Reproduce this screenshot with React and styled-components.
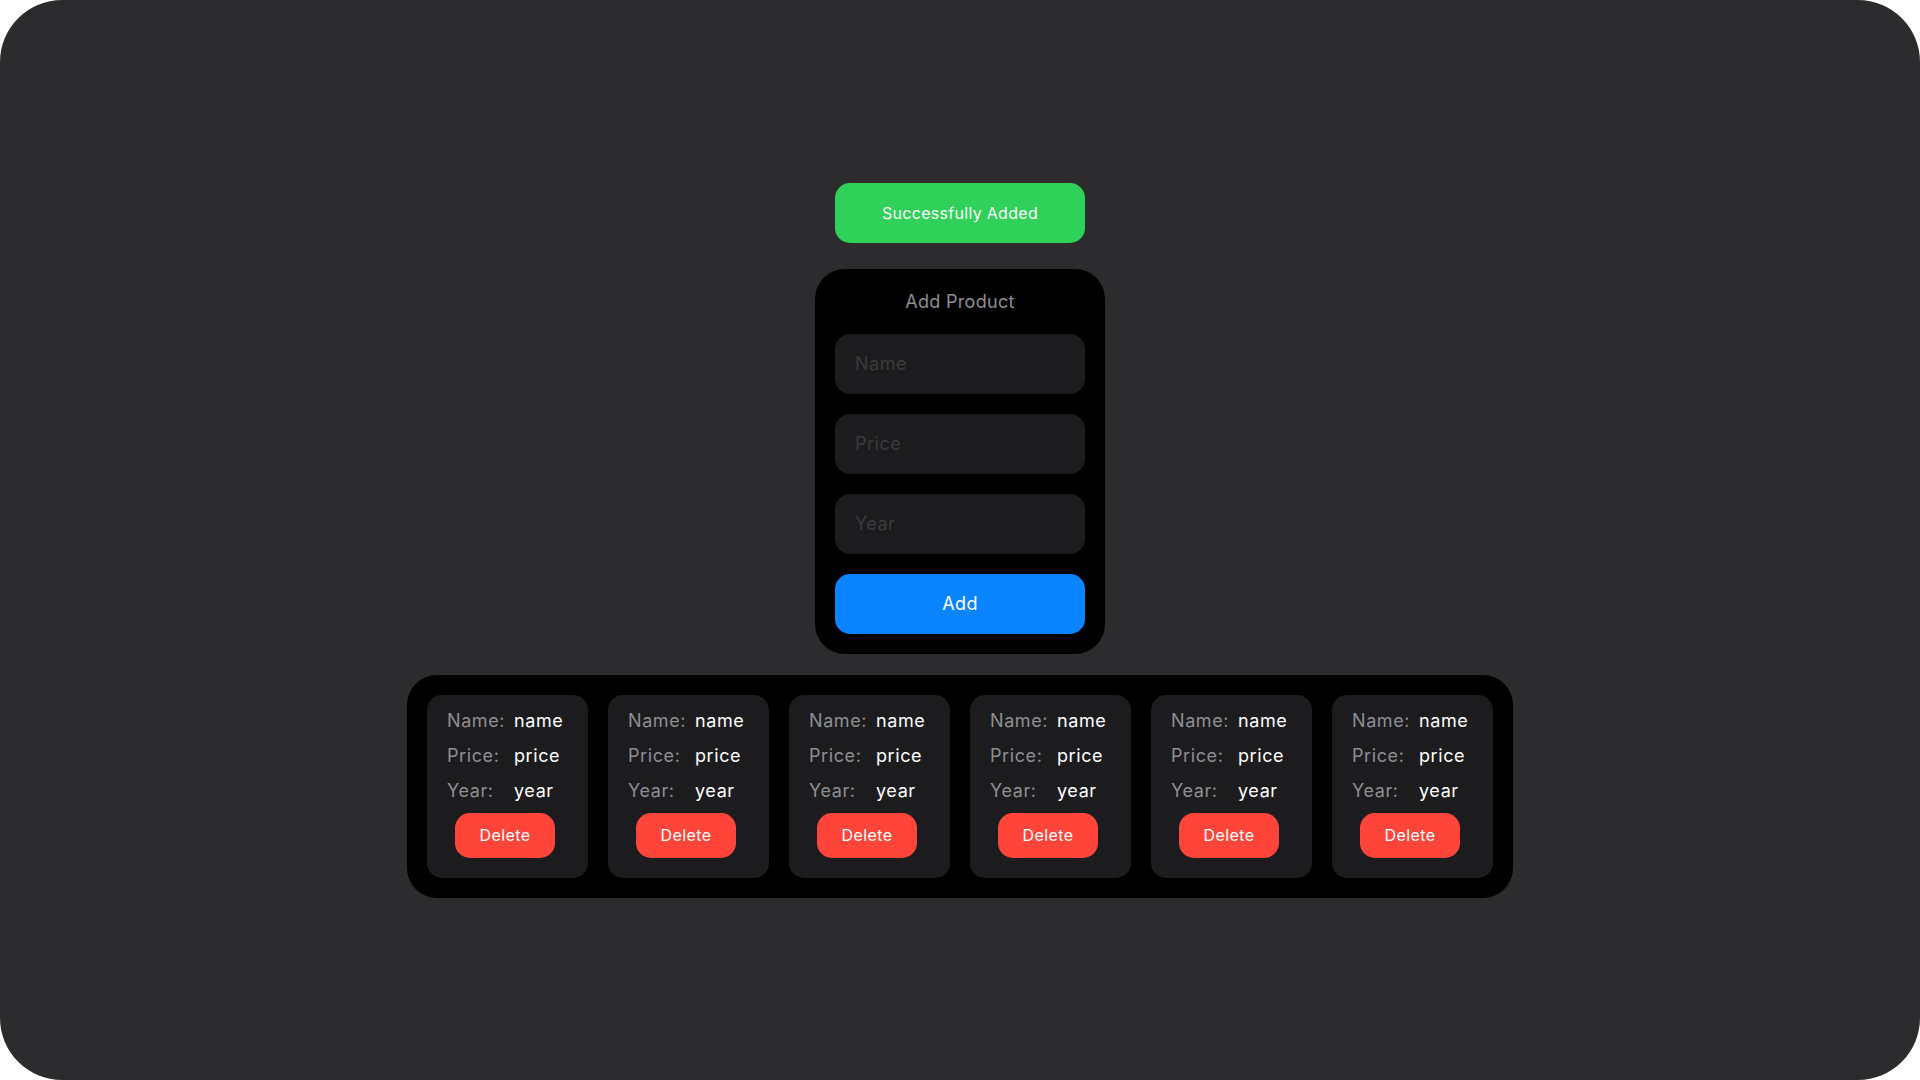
import React from "react";
import styled, { createGlobalStyle } from "styled-components";

const GlobalStyle = createGlobalStyle`
  html, body { margin: 0; padding: 0; background: #ffffff; }
  body { font-family: Inter, "Noto Sans", sans-serif; }
  * { box-sizing: border-box; }
`;

const Page = styled.div`
  width: 1920px;
  height: 1080px;
  background: #2c2c2e;
  border-radius: 62px;
  display: flex;
  flex-direction: column;
  align-items: center;
  justify-content: center;
  font-family: Inter, "Noto Sans", sans-serif;
  letter-spacing: 0.3px;
`;

const Toast = styled.div`
  width: 250px;
  height: 60px;
  border-radius: 15px;
  background: #30d158;
  color: #ffffff;
  font-size: 16px;
  display: flex;
  align-items: center;
  justify-content: center;
  margin-bottom: 26px;
`;

const FormCard = styled.form`
  width: 290px;
  background: #000000;
  border-radius: 30px;
  padding: 19px 20px 20px;
  display: flex;
  flex-direction: column;
  gap: 20px;
  margin-bottom: 21px;
`;

const Title = styled.div`
  text-align: center;
  color: #8e8e93;
  font-size: 18px;
  line-height: 27px;
  margin-bottom: -1px;
`;

const Input = styled.input`
  width: 250px;
  height: 60px;
  border: none;
  outline: none;
  border-radius: 15px;
  background: #1c1c1e;
  color: #ffffff;
  padding: 0 20px;
  font-family: inherit;
  font-size: 18px;
  letter-spacing: 0.5px;
  &::placeholder { color: #3a3a3c; }
`;

const Button = styled.button`
  border: none;
  cursor: pointer;
  color: #ffffff;
  font-family: inherit;
  letter-spacing: 0.4px;
  background: ${(p) => p.$bg};
  border-radius: 15px;
`;

const AddButton = styled(Button)`
  width: 250px;
  height: 60px;
  font-size: 18px;
`;

const List = styled.div`
  background: #000000;
  border-radius: 30px;
  padding: 20px;
  display: flex;
  gap: 20px;
`;

const Item = styled.div`
  width: 161px;
  background: #1c1c1e;
  border-radius: 15px;
  padding: 14px 20px 20px;
  display: flex;
  flex-direction: column;
  gap: 10px;
`;

const Fields = styled.div`
  display: grid;
  grid-template-columns: 57px auto;
  column-gap: 10px;
  row-gap: 11px;
  font-size: 18px;
  line-height: 24px;
  letter-spacing: 0.6px;
`;

const Label = styled.span`
  color: #8e8e93;
`;

const Value = styled.span`
  color: #ffffff;
`;

const DeleteButton = styled(Button)`
  width: 100px;
  height: 45px;
  font-size: 16px;
  align-self: center;
  margin-right: 5px;
`;

const products = Array.from({ length: 6 }, (_, i) => ({
  id: i,
  name: "name",
  price: "price",
  year: "year",
}));

export default function App() {
  return (
    <>
      <GlobalStyle />
      <Page>
        <Toast>Successfully Added</Toast>
        <FormCard onSubmit={(e) => e.preventDefault()}>
          <Title>Add Product</Title>
          <Input placeholder="Name" />
          <Input placeholder="Price" />
          <Input placeholder="Year" />
          <AddButton type="submit" $bg="#0a84ff">Add</AddButton>
        </FormCard>
        <List>
          {products.map((p) => (
            <Item key={p.id}>
              <Fields>
                <Label>Name:</Label>
                <Value>{p.name}</Value>
                <Label>Price:</Label>
                <Value>{p.price}</Value>
                <Label>Year:</Label>
                <Value>{p.year}</Value>
              </Fields>
              <DeleteButton $bg="#ff453a">Delete</DeleteButton>
            </Item>
          ))}
        </List>
      </Page>
    </>
  );
}
